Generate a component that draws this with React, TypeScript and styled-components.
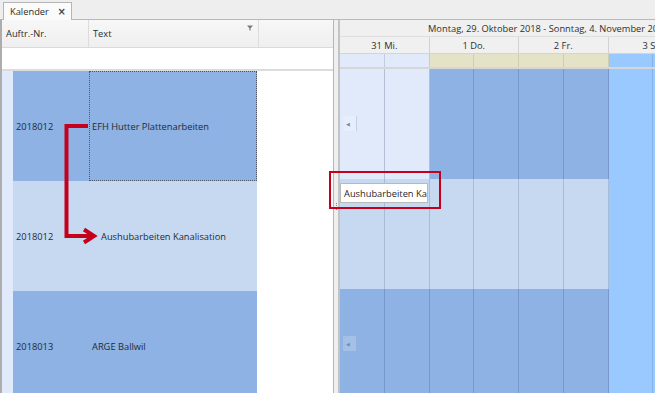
import React from "react";
import styled, { createGlobalStyle } from "styled-components";

const GlobalStyle = createGlobalStyle`
  html, body { margin: 0; padding: 0; overflow: hidden; background: #ffffff; }
  body { font-family: "Open Sans", "Noto Sans", sans-serif; font-size: 9.3px; color: #1f2a38; }
`;

const Frame = styled.div`
  position: relative;
  width: 655px;
  height: 393px;
  display: flex;
  flex-direction: column;
  overflow: hidden;
  background: #ffffff;
`;

const TabBar = styled.div`
  height: 20px;
  flex: none;
  background: #eeeeee;
  border-bottom: 1px solid #b9b9b9;
  display: flex;
  align-items: flex-end;
  padding-left: 3px;
  box-sizing: border-box;
`;

const Tab = styled.div`
  height: 18px;
  width: 69px;
  box-sizing: border-box;
  background: #fbfbfb;
  border: 1px solid #b5b5b5;
  border-bottom: none;
  display: flex;
  align-items: center;
  justify-content: space-between;
  padding: 0 5px 0 6px;
  margin-bottom: -1px;
  color: #2a2a2a;
`;

const Close = styled.span`
  font-family: "DejaVu Sans", sans-serif;
  font-size: 10px;
  font-weight: bold;
  color: #444;
`;

const Main = styled.div`
  flex: 1;
  display: flex;
  min-height: 0;
`;

const Grid = styled.div`
  width: 333px;
  flex: none;
  display: flex;
  flex-direction: column;
  border-left: 2px solid #adadad;
  box-sizing: border-box;
`;

const GridHeader = styled.div`
  height: 28px;
  flex: none;
  display: flex;
  background: linear-gradient(#f7f7f7, #efefef);
  border-bottom: 1px solid #dadada;
  box-sizing: border-box;
`;

const HeadCell = styled.div<{ $w?: number }>`
  ${(p) => (p.$w ? `width: ${p.$w}px; flex: none;` : "flex: 1;")}
  display: flex;
  align-items: center;
  justify-content: space-between;
  padding: 0 5px 0 4px;
  box-sizing: border-box;
  border-right: 1px solid #dcdcdc;
  color: #2b2b2b;
  &:last-child { border-right: none; }
`;

const FilterIcon = styled.svg`
  align-self: flex-start;
  margin-top: 5px;
`;

const FilterRow = styled.div`
  height: 21px;
  flex: none;
  background: #ffffff;
  border-bottom: 2px solid #dcdcdc;
  box-sizing: content-box;
`;

const GridRow = styled.div<{ $bg: string }>`
  height: 110px;
  flex: none;
  display: flex;
  background: #ffffff;
  & > .c { background: ${(p) => p.$bg}; }
`;

const Indicator = styled.div`
  width: 11px;
  flex: none;
  background: #e1eafb;
`;

const Cell = styled.div<{ $w: number; $focus?: boolean; $pad?: number }>`
  width: ${(p) => p.$w}px;
  flex: none;
  display: flex;
  align-items: center;
  box-sizing: border-box;
  padding-left: ${(p) => p.$pad ?? 3}px;
  white-space: nowrap;
  ${(p) => (p.$focus ? "outline: 1px dotted #4a5568; outline-offset: -1px;" : "")}
`;

const Splitter = styled.div`
  width: 7px;
  flex: none;
  background: #efefef;
  border-left: 1px solid #b5b5b5;
  border-right: 2px solid #c4c4c4;
  box-sizing: border-box;
  display: flex;
  flex-direction: column;
  align-items: center;
  justify-content: center;
  gap: 1px;
`;

const Grip = styled.span`
  width: 1px;
  height: 1px;
  background: #888;
`;

const Scheduler = styled.div`
  flex: 1;
  display: flex;
  flex-direction: column;
  min-width: 0;
  overflow: hidden;
`;

const RangeHeader = styled.div`
  height: 17px;
  flex: none;
  background: #f0f0f0;
  border-bottom: 1px solid #dedede;
  box-sizing: border-box;
  display: flex;
  align-items: center;
  padding-left: 88px;
  white-space: nowrap;
  color: #2f2f2f;
`;

const DayHeader = styled.div`
  height: 17px;
  flex: none;
  display: flex;
  background: #f0f0f0;
  border-bottom: 1px solid #d4d4d4;
  box-sizing: border-box;
`;

const Day = styled.div`
  width: 89.5px;
  flex: none;
  box-sizing: border-box;
  border-right: 1px solid #d2d2d2;
  display: flex;
  align-items: center;
  justify-content: center;
  white-space: nowrap;
  color: #2f2f2f;
`;

const SlotRow = styled.div<{ $h: number; $line?: string }>`
  height: ${(p) => p.$h}px;
  flex: none;
  display: flex;
  position: relative;
  ${(p) => (p.$line ? `border-bottom: ${p.$line};` : "")}
`;

const Slot = styled.div<{ $bg: string; $line: string }>`
  width: 44.75px;
  flex: none;
  box-sizing: border-box;
  background: ${(p) => p.$bg};
  border-right: 1px solid ${(p) => p.$line};
`;

const ScrollMark = styled.div`
  position: absolute;
  left: 3px;
  top: 47px;
  width: 14px;
  height: 15px;
  background: rgba(255, 255, 255, 0.2);
  border-right: 1px solid rgba(120, 140, 170, 0.3);
  display: flex;
  align-items: center;
  padding-left: 3px;
  box-sizing: border-box;
  color: #7a8aa3;
  font-family: "DejaVu Sans", sans-serif;
  font-size: 5px;
`;

const Tooltip = styled.div`
  position: absolute;
  left: 340px;
  top: 183px;
  width: 88px;
  height: 20px;
  background: #ffffff;
  border: 1px solid #b9b9b9;
  box-sizing: border-box;
  display: flex;
  align-items: center;
  padding-left: 3px;
  white-space: nowrap;
  overflow: hidden;
  color: #1f1f1f;
`;

const RedBox = styled.div`
  position: absolute;
  left: 329px;
  top: 171px;
  width: 112px;
  height: 38px;
  border: 2px solid #c5001c;
  box-sizing: border-box;
`;

const Arrow = styled.svg`
  position: absolute;
  left: 0;
  top: 0;
  pointer-events: none;
`;

const LIGHT = "#e1eafb";
const DARK = "#8db2e3";
const PALE = "#c6d9f1";
const SAT = "#99c9ff";
const BEIGE = "#e5e3c7";

type S = { bg: string; line: string };
const mk = (a: string, b: string, la: string, lb: string): S[] => [
  { bg: a, line: la },
  { bg: a, line: la },
  { bg: b, line: lb },
  { bg: b, line: lb },
  { bg: b, line: lb },
  { bg: b, line: lb },
  { bg: SAT, line: "#86b2e6" },
  { bg: SAT, line: "#86b2e6" },
];

const strip = mk(LIGHT, BEIGE, "#c3ccdc", "#cfcdb2");
const rows: { slots: S[]; mark: boolean }[] = [
  { slots: mk(LIGHT, DARK, "#b3c0d6", "#7798c8"), mark: true },
  { slots: mk(PALE, PALE, "#a9bbd6", "#a9bbd6"), mark: false },
  { slots: mk(DARK, DARK, "#7798c8", "#7798c8"), mark: true },
];

const gridRows = [
  { nr: "2018012", text: "EFH Hutter Plattenarbeiten", bg: DARK, focus: true, pad: 3 },
  { nr: "2018012", text: "Aushubarbeiten Kanalisation", bg: PALE, focus: false, pad: 12 },
  { nr: "2018013", text: "ARGE Ballwil", bg: DARK, focus: false, pad: 3 },
];

export default function App() {
  return (
    <Frame>
      <GlobalStyle />
      <TabBar>
        <Tab>
          <span>Kalender</span>
          <Close>×</Close>
        </Tab>
      </TabBar>
      <Main>
        <Grid>
          <GridHeader>
            <HeadCell $w={87}>Auftr.-Nr.</HeadCell>
            <HeadCell $w={170}>
              <span>Text</span>
              <FilterIcon width="6" height="6" viewBox="0 0 6 6">
                <path d="M0 0.5H6L3.6 3.2V5.5H2.4V3.2Z" fill="#7a7a7a" />
              </FilterIcon>
            </HeadCell>
            <HeadCell />
          </GridHeader>
          <FilterRow />
          {gridRows.map((r, i) => (
            <GridRow key={i} $bg={r.bg}>
              <Indicator />
              <Cell className="c" $w={76}>{r.nr}</Cell>
              <Cell className="c" $w={168} $focus={r.focus} $pad={r.pad}>
                {r.text}
              </Cell>
            </GridRow>
          ))}
        </Grid>
        <Splitter>
          <Grip />
          <Grip />
          <Grip />
          <Grip />
        </Splitter>
        <Scheduler>
          <RangeHeader>Montag, 29. Oktober 2018 - Sonntag, 4. November 2018</RangeHeader>
          <DayHeader>
            <Day>31 Mi.</Day>
            <Day>1 Do.</Day>
            <Day>2 Fr.</Day>
            <Day>3 Sa.</Day>
          </DayHeader>
          <SlotRow $h={13} $line="2px solid #d6d6d6">
            {strip.map((s, j) => (
              <Slot key={j} $bg={s.bg} $line={s.line} />
            ))}
          </SlotRow>
          {rows.map((r, i) => (
            <SlotRow key={i} $h={110}>
              {r.slots.map((s, j) => (
                <Slot key={j} $bg={s.bg} $line={s.line} />
              ))}
              {r.mark && <ScrollMark>◀</ScrollMark>}
            </SlotRow>
          ))}
        </Scheduler>
      </Main>
      <RedBox />
      <Tooltip>Aushubarbeiten Ka</Tooltip>
      <Arrow width="120" height="260" viewBox="0 0 120 260">
        <path d="M88 126H66.5V236H92" fill="none" stroke="#c5001c" strokeWidth="4" />
        <path d="M84 229.5L94 236L84 242.5" fill="none" stroke="#c5001c" strokeWidth="4" />
      </Arrow>
    </Frame>
  );
}
